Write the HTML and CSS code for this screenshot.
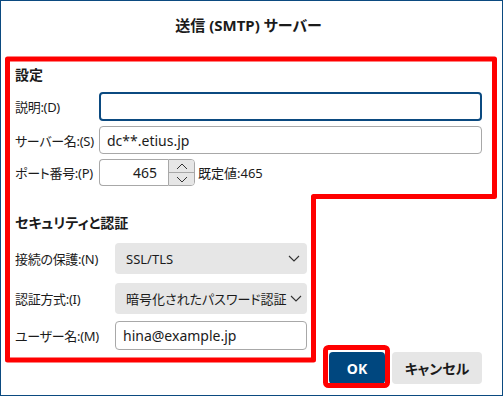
FILE: index.html
```html
<!DOCTYPE html>
<html lang="ja">
<head>
    <meta charset="UTF-8">
    <meta name="viewport" content="width=device-width, initial-scale=1.0">
    <title>送信 (SMTP) サーバー</title>
    <link rel="stylesheet" href="styles.css">
</head>
<body>
    <div class="window">
        <h1 class="title">送信 (SMTP) サーバー</h1>

        <section class="group group-main">
            <h2 class="group-title">設定</h2>
            <div class="row row-desc">
                <span class="label">説明:(D)</span>
                <div class="field field-focus"></div>
            </div>
            <div class="row row-server">
                <span class="label">サーバー名:(S)</span>
                <div class="field">dc**.etius.jp</div>
            </div>
            <div class="row row-port">
                <span class="label">ポート番号:(P)</span>
                <div class="spinner">
                    <div class="spinner-value">465</div>
                    <div class="spinner-buttons">
                        <span class="spin-btn">
                            <svg width="12" height="7" viewBox="0 0 12 7"><path d="M1 6 L6 1 L11 6" fill="none" stroke="#333" stroke-width="1"/></svg>
                        </span>
                        <span class="spin-btn">
                            <svg width="12" height="7" viewBox="0 0 12 7"><path d="M1 1 L6 6 L11 1" fill="none" stroke="#333" stroke-width="1"/></svg>
                        </span>
                    </div>
                </div>
                <span class="default-port">既定値:465</span>
            </div>
        </section>

        <section class="group group-security">
            <h2 class="group-title">セキュリティと認証</h2>
            <div class="row row-conn">
                <span class="label">接続の保護:(N)</span>
                <div class="select">
                    <span>SSL/TLS</span>
                    <svg class="chevron" width="12" height="7" viewBox="0 0 12 7"><path d="M1 1 L6 6 L11 1" fill="none" stroke="#333" stroke-width="1.1"/></svg>
                </div>
            </div>
            <div class="row row-auth">
                <span class="label">認証方式:(I)</span>
                <div class="select">
                    <span>暗号化されたパスワード認証</span>
                    <svg class="chevron" width="12" height="7" viewBox="0 0 12 7"><path d="M1 1 L6 6 L11 1" fill="none" stroke="#333" stroke-width="1.1"/></svg>
                </div>
            </div>
            <div class="row row-user">
                <span class="label">ユーザー名:(M)</span>
                <div class="field">hina@example.jp</div>
            </div>
        </section>

        <div class="actions">
            <button class="btn btn-primary">OK</button>
            <button class="btn">キャンセル</button>
        </div>

        <!-- red callout marks -->
        <svg class="marks" width="503" height="396" viewBox="0 0 503 396">
            <path d="M7.5 59 H494.5 V196.5 H313.5 V360 H7.5 Z" fill="none" stroke="#ff0000" stroke-width="5" stroke-linejoin="round"/>
            <rect x="325.5" y="347.5" width="62" height="38" rx="3" fill="none" stroke="#ff0000" stroke-width="5"/>
        </svg>
    </div>
</body>
</html>
```

FILE: styles.css
```css
* {
    box-sizing: border-box;
}
body {
    margin: 0;
    background: #ffffff;
    color: #1b1b1b;
    font-family: "Noto Sans", "Noto Sans CJK JP", sans-serif;
    font-feature-settings: "palt";
    font-size: 13px;
}
.window {
    position: relative;
    width: 503px;
    height: 396px;
    border: 1px solid #0b4a80;
    display: flex;
    flex-direction: column;
    padding: 0 20px 0 14px;
}
.title {
    margin: 14px 0 0;
    font-size: 15px;
    line-height: 20px;
    font-weight: bold;
    text-align: center;
    color: #1b1b1b;
}
.group-title {
    margin: 0;
    font-size: 14px;
    line-height: 20px;
    font-weight: bold;
}
.group-main .group-title {
    margin-top: 30px;
}
.group-security .group-title {
    margin-top: 27px;
}
.row {
    display: flex;
    align-items: center;
}
.label {
    flex: none;
    white-space: nowrap;
    letter-spacing: -0.3px;
}
.group-main .label {
    width: 84px;
}
.group-security .label {
    width: 100px;
}
.field {
    flex: 1;
    align-self: stretch;
    display: flex;
    align-items: center;
    padding: 0 7px;
    border: 1px solid #a8a8a8;
    border-radius: 4px;
    font-size: 14px;
}
.field-focus {
    border: 2px solid #0b4a80;
}
.row-desc {
    margin-top: 7px;
    height: 29px;
}
.row-server {
    margin-top: 5px;
    height: 28px;
}
.row-port {
    margin-top: 5px;
    height: 27px;
}
.spinner {
    display: flex;
    align-self: stretch;
}
.spinner-value {
    width: 69px;
    border: 1px solid #a8a8a8;
    border-right: none;
    border-radius: 4px 0 0 4px;
    display: flex;
    align-items: center;
    justify-content: flex-end;
    padding-right: 11px;
    font-size: 14px;
}
.spinner-buttons {
    width: 27px;
    display: flex;
    flex-direction: column;
    border: 1px solid #a8a8a8;
    border-radius: 0 4px 4px 0;
    overflow: hidden;
}
.spin-btn {
    flex: 1;
    display: flex;
    align-items: center;
    justify-content: center;
    background: #e6e6e6;
}
.spin-btn + .spin-btn {
    border-top: 1px solid #a8a8a8;
}
.default-port {
    margin-left: 3px;
}
.group-security .row {
    width: 292px;
}
.row-conn {
    margin-top: 10px;
    height: 31px;
}
.row-auth {
    margin-top: 9px;
    height: 31px;
}
.row-user {
    margin-top: 7px;
    height: 29px;
}
.select {
    flex: 1;
    align-self: stretch;
    display: flex;
    align-items: center;
    justify-content: space-between;
    padding: 0 7px 0 11px;
    background: #e6e6e6;
    border-radius: 4px;
    font-size: 13px;
    white-space: nowrap;
    overflow: hidden;
}
.select .chevron {
    flex: none;
    margin-left: 3px;
}
.actions {
    display: flex;
    justify-content: flex-end;
    gap: 7px;
    margin-top: 2px;
}
.btn {
    height: 32px;
    border: none;
    border-radius: 4px;
    background: #e6e6e6;
    color: #1b1b1b;
    font-family: "Noto Sans", "Noto Sans CJK JP", sans-serif;
    font-feature-settings: "palt";
    font-size: 14px;
    font-weight: bold;
    width: 90px;
}
.btn-primary {
    width: 56px;
    background: #00477f;
    color: #ffffff;
}
.marks {
    position: absolute;
    left: -1px;
    top: -1px;
    pointer-events: none;
}
```
